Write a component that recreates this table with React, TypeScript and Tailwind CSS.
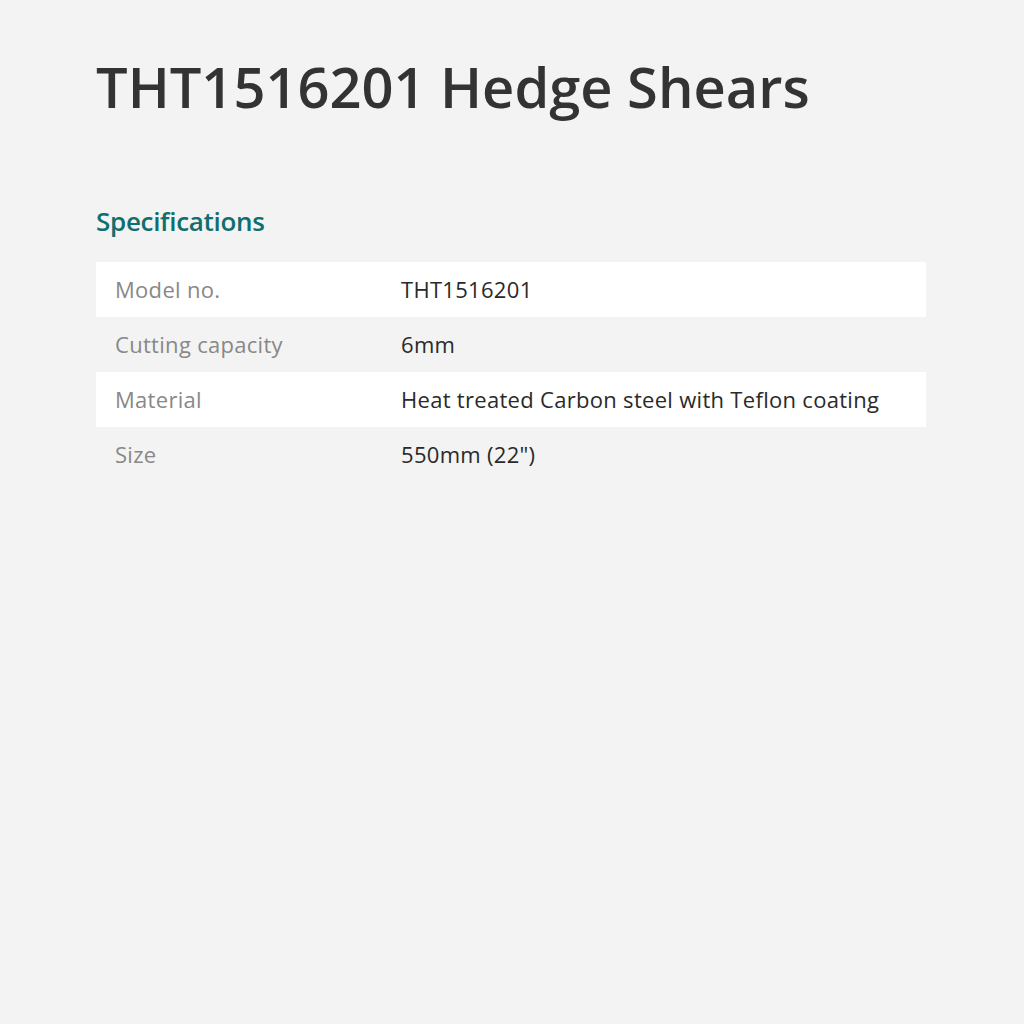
const specs = [
  { label: 'Model no.', value: 'THT1516201' },
  { label: 'Cutting capacity', value: '6mm' },
  { label: 'Material', value: 'Heat treated Carbon steel with Teflon coating' },
  { label: 'Size', value: '550mm (22")' },
];

const App = () => {
  return (
    <div className="min-h-[1024px] w-full bg-[#f3f3f3] font-['Open_Sans',sans-serif]">
      <div className="pl-[96px] pr-[98px] pt-[50px]">
        <h1 className="text-[56px] leading-[72px] font-semibold text-[#333333]">
          THT1516201 Hedge Shears
        </h1>

        <h2 className="mt-[81px] text-[26px] leading-[36px] font-semibold text-[#0f6e6e] tracking-[-0.3px]">
          Specifications
        </h2>

        <div className="mt-[23px] w-[830px]">
          {specs.map((row, i) => (
            <div
              key={row.label}
              className={`flex items-center h-[55px] px-[19px] text-[22px] tracking-[0.3px] ${i % 2 === 0 ? 'bg-white' : 'bg-transparent'}`}
            >
              <div className="w-[286px] text-[#888888]">{row.label}</div>
              <div className="flex-1 text-[#2a2a2a]">{row.value}</div>
            </div>
          ))}
        </div>
      </div>
    </div>
  );
};

export default App;
